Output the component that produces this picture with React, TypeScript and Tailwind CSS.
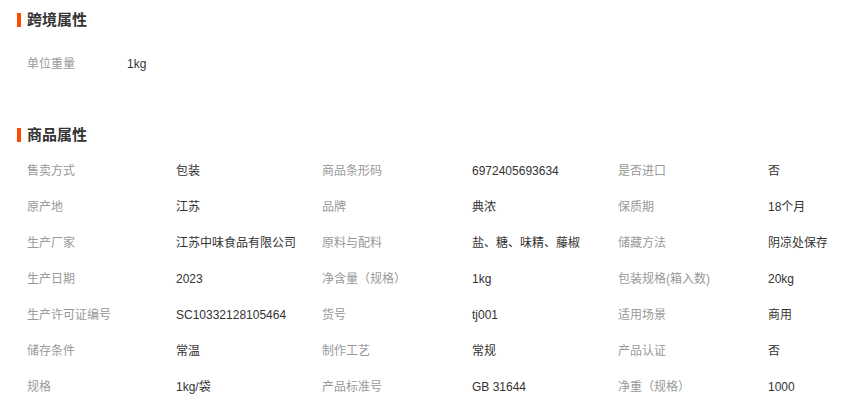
import React from 'react';

const font = { fontFamily: '"Liberation Sans", "Noto Sans CJK SC", sans-serif' };

const rows: [string, string, string, string, string, string][] = [
  ['售卖方式', '包装', '商品条形码', '6972405693634', '是否进口', '否'],
  ['原产地', '江苏', '品牌', '典浓', '保质期', '18个月'],
  ['生产厂家', '江苏中味食品有限公司', '原料与配料', '盐、糖、味精、藤椒', '储藏方法', '阴凉处保存'],
  ['生产日期', '2023', '净含量（规格）', '1kg', '包装规格(箱入数)', '20kg'],
  ['生产许可证编号', 'SC10332128105464', '货号', 'tj001', '适用场景', '商用'],
  ['储存条件', '常温', '制作工艺', '常规', '产品认证', '否'],
  ['规格', '1kg/袋', '产品标准号', 'GB 31644', '净重（规格）', '1000'],
];

const Title = ({ text }: { text: string }) => (
  <div className="flex items-center h-[30px] pl-[17px]">
    <span className="w-[4px] h-[14px] bg-[#ff4a00]" />
    <span className="ml-[6px] text-[15px] font-bold text-[#333]">{text}</span>
  </div>
);

export default function App() {
  return (
    <div className="w-[868px] h-[417px] bg-white overflow-hidden text-[12px]" style={font}>
      <div className="pt-[5px]">
        <Title text="跨境属性" />
        <div className="mt-[11px] pl-[27px] h-[36px] flex items-center">
          <span className="w-[100px] text-[#999]">单位重量</span>
          <span className="text-[#333]">1kg</span>
        </div>
      </div>

      <div className="mt-[38px]">
        <Title text="商品属性" />
        <div className="mt-[3px] pl-[27px]">
          {rows.map((r, i) => (
            <div
              key={i}
              className="grid grid-cols-[149px_146px_150px_146px_150px_59px] h-[36px] items-center whitespace-nowrap"
            >
              <span className="text-[#999]">{r[0]}</span>
              <span className="text-[#333]">{r[1]}</span>
              <span className="text-[#999]">{r[2]}</span>
              <span className="text-[#333]">{r[3]}</span>
              <span className="text-[#999]">{r[4]}</span>
              <span className="text-[#333] overflow-hidden">{r[5]}</span>
            </div>
          ))}
        </div>
      </div>
    </div>
  );
}
